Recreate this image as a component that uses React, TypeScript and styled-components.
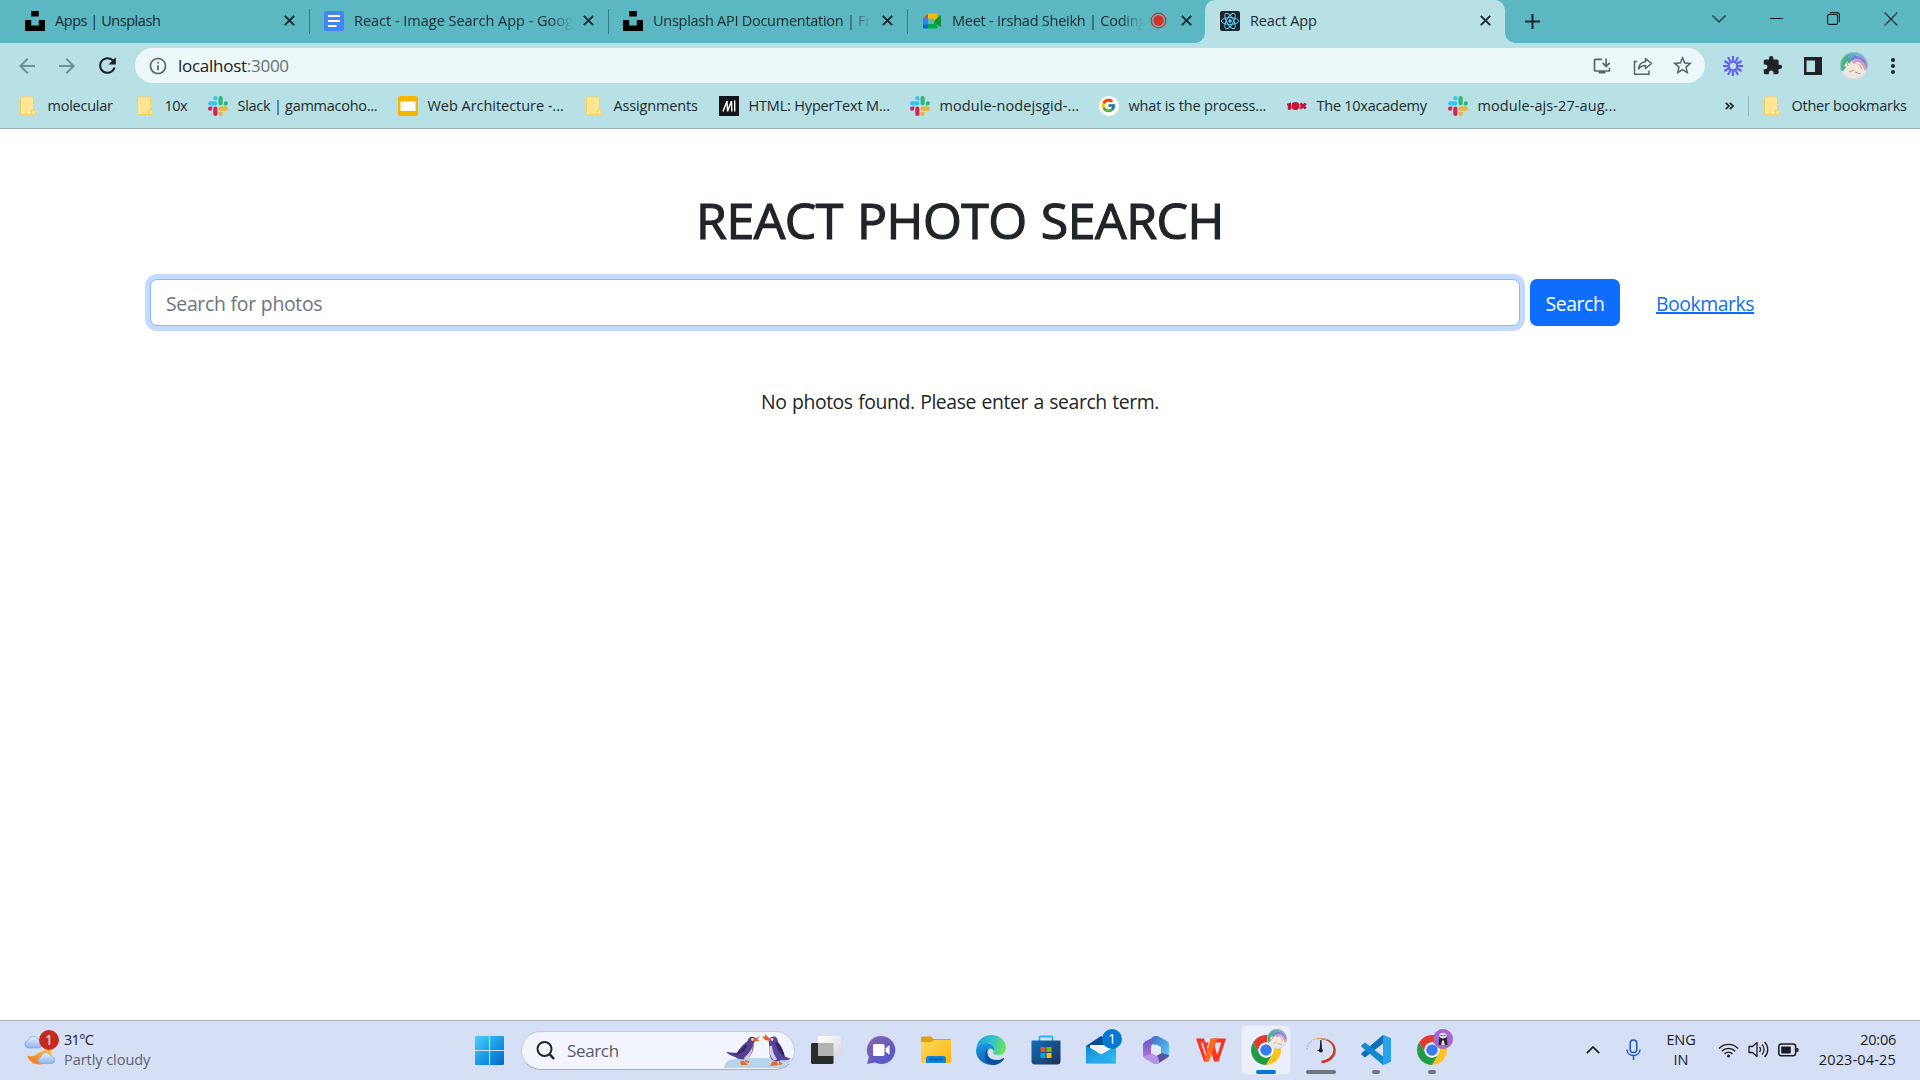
import React from "react";
import styled, { createGlobalStyle, css } from "styled-components";
import { FcGoogle } from "react-icons/fc";
import {
  MdArrowBack,
  MdArrowForward,
  MdRefresh,
  MdInfoOutline,
  MdInstallDesktop,
  MdStarBorder,
  MdExtension,
  MdMoreVert,
} from "react-icons/md";

const GlobalStyle = createGlobalStyle`
  * { box-sizing: border-box; }
  html, body { margin: 0; padding: 0; overflow: hidden; }
  body { font-family: "Open Sans", "Noto Sans", sans-serif; background: #fff; color: #212529; }
  svg { display: block; flex: none; }
`;

/* ---------- shell ---------- */

const Screen = styled.div`
  width: 1920px;
  height: 1080px;
  display: flex;
  flex-direction: column;
  overflow: hidden;
`;

const Label = styled.span<{ $ls?: number; $size?: number; $color?: string }>`
  font-size: ${(p) => p.$size ?? 14.5}px;
  letter-spacing: ${(p) => p.$ls ?? 0}px;
  color: ${(p) => p.$color ?? "#1c2a2e"};
  line-height: 20px;
  white-space: pre;
`;

const Slot = styled.span<{ $w: number }>`
  width: ${(p) => p.$w}px;
  flex: none;
  display: flex;
  align-items: center;
  justify-content: center;
`;

/* ---------- tab strip ---------- */

const TabStrip = styled.div`
  height: 43px;
  flex: none;
  display: flex;
  padding-left: 10px;
  background: #5bb8c2;
`;

const Tab = styled.div<{ $active?: boolean; $divider?: boolean }>`
  position: relative;
  width: 299px;
  flex: none;
  height: 43px;
  display: flex;
  align-items: center;
  padding: 0 14px 2px 15px;
  ${(p) =>
    p.$divider &&
    css`
      &::after {
        content: "";
        position: absolute;
        right: -1px;
        top: 9px;
        width: 1px;
        height: 25px;
        background: #2d7f89;
      }
    `}
  ${(p) =>
    p.$active &&
    css`
      width: 300px;
      margin-left: -1px;
      background: #b8e1e5;
      border-radius: 10px 10px 0 0;
      &::before,
      &::after {
        content: "";
        position: absolute;
        bottom: 0;
        width: 10px;
        height: 10px;
      }
      &::before {
        left: -10px;
        background: radial-gradient(circle at 0 0, transparent 9.5px, #b8e1e5 10px);
      }
      &::after {
        right: -10px;
        background: radial-gradient(circle at 100% 0, transparent 9.5px, #b8e1e5 10px);
      }
    `}
`;

const TabTitle = styled.div<{ $fade?: boolean }>`
  flex: 1;
  min-width: 0;
  margin-left: 10px;
  overflow: hidden;
  display: flex;
  ${(p) =>
    p.$fade &&
    css`
      mask-image: linear-gradient(90deg, #000 calc(100% - 24px), transparent 100%);
    `}
`;

const TabClose = styled.span`
  margin-left: 10px;
  flex: none;
`;

const WindowControls = styled.div`
  margin-left: auto;
  height: 37px;
  display: flex;
`;

/* ---------- toolbar ---------- */

const Toolbar = styled.div`
  height: 45px;
  flex: none;
  display: flex;
  align-items: center;
  padding-left: 7px;
  background: #b8e1e5;
`;

const Omnibox = styled.div`
  width: 1570px;
  height: 35px;
  margin: 0 7px 0 8px;
  padding: 0 3px 0 13px;
  flex: none;
  display: flex;
  align-items: center;
  border-radius: 18px;
  background: #ebf7f8;
`;

const Address = styled.div`
  flex: 1;
  margin-left: 10px;
  display: flex;
`;

const BookmarkBar = styled.div`
  height: 41px;
  flex: none;
  display: flex;
  align-items: center;
  padding: 0 0 5px 18px;
  background: #b8e1e5;
  border-bottom: 1px solid #93b4b7;
`;

const Bookmark = styled.div<{ $w: number }>`
  width: ${(p) => p.$w}px;
  flex: none;
  display: flex;
  align-items: center;
  gap: 9.5px;
`;

const BarDivider = styled.span`
  width: 1px;
  height: 20px;
  margin: 0 13px 0 14px;
  background: #86b5ba;
`;

const BarEnd = styled.div`
  margin-left: auto;
  display: flex;
  align-items: center;
  padding-right: 13px;
`;

/* ---------- page ---------- */

const Page = styled.main`
  flex: 1;
  display: flex;
  flex-direction: column;
  align-items: center;
  padding-top: 61px;
`;

const Heading = styled.h1`
  margin: 0;
  height: 60px;
  line-height: 60px;
  font-size: 50px;
  font-weight: 400;
  letter-spacing: -0.5px;
  word-spacing: 1.6px;
  color: #212529;
  -webkit-text-stroke: 1.2px #212529;
`;

const SearchRow = styled.form`
  width: 1620px;
  height: 47px;
  margin-top: 29px;
  display: flex;
  align-items: center;
`;

const SearchInput = styled.input`
  width: 1370px;
  height: 47px;
  padding: 2px 15px 0 15px;
  border: 1px solid #86b7fe;
  border-radius: 7px;
  outline: 0;
  box-shadow: 0 0 0 5px #c2dbfe;
  font: 400 19.4px "Open Sans", "Noto Sans", sans-serif;
  letter-spacing: -0.32px;
  word-spacing: 0.4px;
  color: #212529;
  &::placeholder {
    color: #6c757d;
    opacity: 1;
  }
`;

const SearchButton = styled.button`
  width: 90px;
  height: 47px;
  margin-left: 10px;
  padding: 2px 0 0;
  border: 0;
  border-radius: 7px;
  background: #0d6efd;
  color: #fff;
  font: 400 19.4px "Open Sans", "Noto Sans", sans-serif;
  letter-spacing: -0.4px;
`;

const BookmarksLink = styled.a`
  margin-left: 36px;
  padding-top: 2px;
  font-size: 19.4px;
  letter-spacing: -0.45px;
  line-height: 30px;
  color: #0d6efd;
  text-decoration: underline;
  text-decoration-thickness: 2px;
  text-underline-offset: 1px;
  text-decoration-skip-ink: none;
`;

const EmptyNote = styled.p`
  margin: 61px 0 0;
  font-size: 19.4px;
  letter-spacing: -0.42px;
  word-spacing: 0.9px;
  line-height: 30px;
`;

/* ---------- taskbar ---------- */

const Taskbar = styled.footer`
  height: 60px;
  flex: none;
  display: flex;
  align-items: center;
  background: #d5e0f7;
  border-top: 1px solid #a9afbd;
`;

const Weather = styled.div`
  width: 462px;
  padding-left: 24px;
  display: flex;
  align-items: center;
  gap: 7px;
`;

const TwoLines = styled.div<{ $align?: string }>`
  display: flex;
  flex-direction: column;
  align-items: ${(p) => p.$align ?? "flex-start"};
  padding-bottom: 2px;
`;

const WeatherIcon = styled.div`
  position: relative;
  width: 33px;
  height: 36px;
  margin-bottom: 6px;
`;

const Badge = styled.span<{ $bg: string; $x: number; $y: number }>`
  position: absolute;
  left: ${(p) => p.$x}px;
  top: ${(p) => p.$y}px;
  width: 20px;
  height: 20px;
  border-radius: 50%;
  background: ${(p) => p.$bg};
  color: #fff;
  font-size: 14px;
  line-height: 19px;
  text-align: center;
`;

const SearchPill = styled.div`
  width: 274px;
  height: 39px;
  margin: 0 3px 0 4px;
  flex: none;
  display: flex;
  align-items: center;
  padding: 0 2px 0 14px;
  border: 1px solid #c3cce2;
  border-bottom-color: #a6adbe;
  border-radius: 20px;
  background: #f2f5fd;
  overflow: hidden;
`;

const PillText = styled.div`
  flex: 1;
  margin-left: 12px;
  display: flex;
`;

const AppSlot = styled.div`
  position: relative;
  width: 55.1px;
  height: 59px;
  padding-bottom: 1px;
  flex: none;
  display: flex;
  align-items: center;
  justify-content: center;
`;

const AppTile = styled.div<{ $on?: boolean }>`
  position: relative;
  width: 48px;
  height: 48px;
  display: flex;
  align-items: center;
  justify-content: center;
  border-radius: 5px;
  background: ${(p) => (p.$on ? "#eaeffb" : "transparent")};
  box-shadow: ${(p) => (p.$on ? "0 0 0 1px #dde4f5" : "none")};
`;

const Indicator = styled.span<{ $w: number; $c: string }>`
  position: absolute;
  bottom: 0;
  left: ${(p) => 24 - p.$w / 2}px;
  width: ${(p) => p.$w}px;
  height: 4px;
  border-radius: 2px;
  background: ${(p) => p.$c};
`;

const AvatarBadge = styled.span`
  position: absolute;
  right: 3px;
  top: 3px;
`;

const Tray = styled.div`
  margin-left: auto;
  padding-right: 24px;
  display: flex;
  align-items: center;
`;

const TrayItem = styled(Slot)`
  padding-bottom: 2px;
`;

const Clock = styled(TwoLines)`
  width: 93px;
`;

/* ---------- drawings ---------- */

const CloseGlyph = () => (
  <svg width="11" height="11" viewBox="0 0 11 11" stroke="#17272b" strokeWidth="1.9">
    <path d="M.8.8l9.4 9.4M10.2.8L.8 10.2" />
  </svg>
);

const UnsplashIcon = () => (
  <svg width="20" height="20" viewBox="0 0 20 20">
    <path d="M6.2 0h7.6v5.6H6.2zM13.8 9H20v11H0V9h6.2v5.6h7.6z" fill="#000" />
  </svg>
);

const DocsIcon = () => (
  <svg width="20" height="20" viewBox="0 0 20 20">
    <rect width="20" height="20" rx="2" fill="#4285f4" />
    <path d="M4 5h12M4 10h12M4 15h8.500" stroke="#fff" strokeWidth="2" />
  </svg>
);

const MeetIcon = () => (
  <svg width="20" height="20" viewBox="0 0 20 20">
    <path d="M1 7.500L6 2.500V7.500z" fill="#ea4335" />
    <path d="M6 2.500h8.500a1 1 0 0 1 1 1V9L12 10V7.500H6z" fill="#fbbc04" />
    <path d="M1 7.500h5v6H1z" fill="#2684fc" />
    <path d="M1 13.500h5v4H2a1 1 0 0 1-1-1z" fill="#0066da" />
    <path d="M6 13h6v-3l3.500 1v5.500a1 1 0 0 1-1 1H6z" fill="#00ac47" />
    <path d="M12 10l5.700-5.600c.5-.4 1.300-.1 1.300.6v10c0 .7-.8 1-1.300.6z" fill="#15933c" />
  </svg>
);

const RecordIcon = () => (
  <svg width="17" height="17" viewBox="0 0 17 17">
    <circle cx="8.500" cy="8.500" r="7.300" fill="none" stroke="#d93025" strokeWidth="1.300" />
    <circle cx="8.500" cy="8.500" r="5.200" fill="#d93025" />
  </svg>
);

const Recording = styled.span`
  margin: 0 4px 0 6px;
`;

const ReactIcon = () => (
  <svg width="20" height="20" viewBox="0 0 20 20">
    <rect width="20" height="20" rx="2" fill="#20232a" />
    <g fill="none" stroke="#61dafb" strokeWidth=".9">
      <ellipse cx="10" cy="10" rx="8.700" ry="3.400" />
      <ellipse cx="10" cy="10" rx="8.700" ry="3.400" transform="rotate(60 10 10)" />
      <ellipse cx="10" cy="10" rx="8.700" ry="3.400" transform="rotate(120 10 10)" />
    </g>
    <circle cx="10" cy="10" r="1.700" fill="#61dafb" />
  </svg>
);

const FolderIcon = () => (
  <svg width="20" height="20" viewBox="0 0 20 20">
    <path d="M3.500 1h11a1 1 0 0 1 1 1v11.500c1.300.3 1.800 1.200 1.800 2.500v1.500a1 1 0 0 1-1 1H3.500a1 1 0 0 1-1-1V2a1 1 0 0 1 1-1z" fill="#ffe694" stroke="#f7d25c" />
    <path d="M15.500 13.500c-1.800.2-2 1.500-1.800 4.800" fill="none" stroke="#f0c84b" />
  </svg>
);

const SlackIcon = () => (
  <svg width="20" height="20" viewBox="0 0 24 24">
    <path fill="#e01e5a" d="M5.042 15.165a2.528 2.528 0 0 1-2.520 2.523A2.528 2.528 0 0 1 0 15.165a2.527 2.527 0 0 1 2.522-2.520h2.520v2.520zM6.313 15.165a2.527 2.527 0 0 1 2.521-2.520 2.527 2.527 0 0 1 2.521 2.520v6.313A2.528 2.528 0 0 1 8.834 24a2.528 2.528 0 0 1-2.521-2.522v-6.313z" />
    <path fill="#36c5f0" d="M8.834 5.042a2.528 2.528 0 0 1-2.521-2.520A2.528 2.528 0 0 1 8.834 0a2.528 2.528 0 0 1 2.521 2.522v2.520H8.834zM8.834 6.313a2.528 2.528 0 0 1 2.521 2.521 2.528 2.528 0 0 1-2.521 2.521H2.522A2.528 2.528 0 0 1 0 8.834a2.528 2.528 0 0 1 2.522-2.521h6.312z" />
    <path fill="#2eb67d" d="M18.956 8.834a2.528 2.528 0 0 1 2.522-2.521A2.528 2.528 0 0 1 24 8.834a2.528 2.528 0 0 1-2.522 2.521h-2.522V8.834zM17.688 8.834a2.528 2.528 0 0 1-2.523 2.521 2.527 2.527 0 0 1-2.520-2.521V2.522A2.527 2.527 0 0 1 15.165 0a2.528 2.528 0 0 1 2.523 2.522v6.312z" />
    <path fill="#ecb22e" d="M15.165 18.956a2.528 2.528 0 0 1 2.523 2.522A2.528 2.528 0 0 1 15.165 24a2.527 2.527 0 0 1-2.520-2.522v-2.522h2.520zM15.165 17.688a2.527 2.527 0 0 1-2.520-2.523 2.526 2.526 0 0 1 2.520-2.520h6.313A2.527 2.527 0 0 1 24 15.165a2.528 2.528 0 0 1-2.522 2.523h-6.313z" />
  </svg>
);

const SlidesIcon = () => (
  <svg width="20" height="20" viewBox="0 0 20 20">
    <rect width="20" height="20" rx="2" fill="#f9b400" />
    <rect x="2.500" y="5.500" width="15" height="9.500" fill="#fff" />
  </svg>
);

const MdnIcon = () => (
  <svg width="20" height="20" viewBox="0 0 20 20">
    <rect width="20" height="20" fill="#15141a" />
    <path d="M4 15.500L8 5M8 5l.5 10.500M8.500 15.500L12.500 5M12.500 5l.3 10.500M15.700 4.500v11" fill="none" stroke="#fff" strokeWidth="1.400" />
  </svg>
);

const GoogleIcon = () => (
  <svg width="20" height="20" viewBox="0 0 20 20">
    <circle cx="10" cy="10" r="10" fill="#fff" />
    <FcGoogle x="1.500" y="1.500" width="17" height="17" />
  </svg>
);

const TenXIcon = () => (
  <svg width="20" height="20" viewBox="0 0 20 20">
    <g fill="#c3143a">
      <path d="M0 7.800L4 6.500v7.200H.8V9.500H0z" />
      <circle cx="8.400" cy="10" r="4" />
    </g>
    <path d="M13.200 7.500l5.600 5M18.800 7.500l-5.600 5" stroke="#c3143a" strokeWidth="2.800" />
  </svg>
);

const ShareIcon = () => (
  <svg width="20" height="20" viewBox="0 0 20 20" fill="none" stroke="#5b6568" strokeWidth="1.500">
    <path d="M4 5.500H1.500v12.800H16V14.500" />
    <path d="M5.500 13C6 8.500 8.500 6 12.500 5.700V2.500l6 5-6 5V9.400c-3 0-5.200 1-7 3.600z" strokeLinejoin="round" />
  </svg>
);

const LoomIcon = () => (
  <svg width="20" height="20" viewBox="-10 -10 20 20">
    <g stroke="#625df5" strokeWidth="2.100">
      {Array.from({ length: 12 }, (_, i) => (
        <path key={i} d="M0-3.500V-10" transform={`rotate(${i * 30})`} />
      ))}
    </g>
    <circle r="4.200" fill="none" stroke="#625df5" strokeWidth="1.600" />
  </svg>
);

const SidePanelIcon = () => (
  <svg width="18" height="18" viewBox="0 0 18 18">
    <path d="M0 0h18v18H0zM2.500 3.500v11.500H11V3.500z" fill="#1f2326" fillRule="evenodd" />
  </svg>
);

const Unicorn = ({ size, id }: { size: number; id: string }) => (
  <svg width={size} height={size} viewBox="0 0 28 28">
    <clipPath id={id}>
      <circle cx="14" cy="14" r="14" />
    </clipPath>
    <g clipPath={`url(#${id})`}>
      <rect width="28" height="28" fill="#e8e6e8" />
      <path d="M0 0h19L3 19H0z" fill="#48b08c" />
      <g fill="none" strokeWidth="3">
        <path d="M9 6C14 0 23 0 29 12" stroke="#67a9dd" />
        <path d="M11 8C16 3 23 5 28 16" stroke="#7f84d2" />
        <path d="M13 11c4-5 10-2 13 7" stroke="#dd98c6" />
      </g>
      <path d="M4 14l3-5 3 4c3 2 7 2 10-2l3 5-3 2 2 4-5-3-6 1-5 2 2-4-1-3z" fill="#f2e8d4" />
      <path d="M7 9l1 5M9 20l5-2M15 20l6 2M19 12l3 5" stroke="#ad9a80" strokeWidth=".9" fill="none" />
    </g>
    <circle cx="14" cy="14" r="13.500" fill="none" stroke="#c7cdd0" strokeWidth=".7" />
  </svg>
);

const GhostAvatar = () => (
  <svg width="20" height="20" viewBox="0 0 20 20">
    <circle cx="10" cy="10" r="9.700" fill="#a864d2" stroke="#8f62ae" strokeWidth=".6" />
    <path d="M6.300 8h7.400l.8 8H5.500z" fill="#29242e" />
    <path d="M6.300 6.500C6.300 2.800 13.700 2.800 13.700 6.500c0 4-7.400 4-7.400 0z" fill="#e3dfe6" />
    <path d="M9 11.500h2l.8 4.500H8.200z" fill="#e3dfe6" />
    <path d="M7.500 6.500h2M10.500 6.500h2" stroke="#55505c" strokeWidth="1" />
  </svg>
);

const WeatherArt = () => (
  <svg width="33" height="36" viewBox="0 0 33 36">
    <defs>
      <linearGradient id="moon" x1="0" y1="1" x2="1" y2="0">
        <stop offset="0" stopColor="#f2711c" />
        <stop offset="1" stopColor="#ffc63d" />
      </linearGradient>
      <linearGradient id="cloud" x1="0" y1="0" x2="0" y2="1">
        <stop offset="0" stopColor="#e3f0ff" />
        <stop offset="1" stopColor="#8fb4ea" />
      </linearGradient>
    </defs>
    <path d="M3 25.500c3 1.500 7 1 11-2 4-2.800 7-4 13-5 1.500 8-3 16-12 16-6 0-10-4-12-9z" fill="url(#moon)" />
    <path d="M4 18a3.800 3.800 0 0 1 0-7.500 5.500 5.500 0 0 1 10-1.500c4-.5 5 9 1 9z" fill="url(#cloud)" stroke="#7fa9e2" strokeWidth=".7" />
    <path d="M17 33.500a3.500 3.500 0 0 1 0-6.800 5 5 0 0 1 9.500-1c5 0 5.500 7.800 1.500 7.800z" fill="url(#cloud)" stroke="#7fa9e2" strokeWidth=".7" />
  </svg>
);

const StartIcon = () => (
  <svg width="29" height="29" viewBox="0 0 29 29">
    <defs>
      <linearGradient id="win" x1="0" y1="0" x2="1" y2="1">
        <stop offset="0" stopColor="#4fd0ff" />
        <stop offset=".6" stopColor="#1192e0" />
        <stop offset="1" stopColor="#0069c8" />
      </linearGradient>
    </defs>
    <path d="M1 0h13v14H0V1a1 1 0 0 1 1-1zM15 0h13a1 1 0 0 1 1 1v13H15zM0 15h14v14H1a1 1 0 0 1-1-1zM15 15h14v13a1 1 0 0 1-1 1H15z" fill="url(#win)" />
  </svg>
);

const MagnifierIcon = () => (
  <svg width="19" height="20" viewBox="0 0 19 20" fill="none" stroke="#22262b" strokeWidth="2">
    <circle cx="8.500" cy="8" r="7" />
    <path d="M13.500 13l4.500 5" strokeWidth="2.600" />
  </svg>
);

const Penguins = () => (
  <svg width="68" height="35" viewBox="0 0 68 35">
    <path d="M0 35c1-5 3-8 8-8.500C20 24.500 50 24.500 66 27v8z" fill="#b7d6ee" />
    <path d="M32 6c-3-4-8-2-8.500 2-4 3-8 7-10.500 12l-11-1c3 3 6 4 9 5 4 3 11 4 15-1 3-4 4-8 3.500-12z" fill="#55418f" />
    <path d="M28.500 13c.5 4-1 9-5.500 13-1.500.5-3 0-3-1 3.500-3.500 7-6.500 8.500-12z" fill="#d3c9e8" />
    <path d="M22 11c-3 4-8 9-13 11 7 0 13-4 14-9z" fill="#33266a" />
    <path d="M30 6l6-3-3 3.500 3 1-6 1z" fill="#f0581e" />
    <circle cx="28.500" cy="6.500" r="1.400" fill="#f6d7b0" />
    <path d="M16 28l4 0 4 4-7 0zM21 27l4 1 0 2-4-1z" fill="#f0692a" />
    <path d="M45 6c3-4.500 9-3 9 3 3 3 5 8 6 14l7 3c-4 1.500-7 1.500-10 1-4 3-10 1-11-4-1-5-1-12-1-17z" fill="#57439a" />
    <path d="M45.500 13c-1 6 1 11 4 14 1.500.7 3.500 0 3.500-1-3-4-4.500-8-5-13z" fill="#d3c9e8" />
    <path d="M51 10c2 6 5 11 10 14-1-6-4-11-8-15z" fill="#34276b" />
    <path d="M46 6l-5-5 0 3-3-1 3 4 5 1z" fill="#f0581e" />
    <circle cx="48" cy="6.500" r="1.400" fill="#f6d7b0" />
    <path d="M48 29l4-1 3 4-9 1zM55 28l4 3-4 1z" fill="#f0692a" />
  </svg>
);

const TaskViewIcon = () => (
  <svg width="30" height="30" viewBox="0 0 30 30">
    <defs>
      <linearGradient id="tv" x1="0" y1="0" x2="1" y2="1">
        <stop offset="0" stopColor="#fff" />
        <stop offset="1" stopColor="#d9d9d9" />
      </linearGradient>
    </defs>
    <rect x="0" y="8" width="22.500" height="21" rx="1.500" fill="#2b2b2b" />
    <rect x="7" y="1" width="23" height="20" rx="1.500" fill="url(#tv)" />
    <path d="M7 8h15.500v13H8.500A1.500 1.500 0 0 1 7 19.500z" fill="#b3b3b3" />
  </svg>
);

const ChatIcon = () => (
  <svg width="30" height="30" viewBox="0 0 30 30">
    <defs>
      <linearGradient id="chat" x1="0" y1="0" x2=".7" y2="1">
        <stop offset="0" stopColor="#8d62a8" />
        <stop offset="1" stopColor="#5059c9" />
      </linearGradient>
    </defs>
    <path d="M15.500 1A14 14 0 1 1 9 27.500L1 29l1.800-7A14 14 0 0 1 15.500 1z" fill="url(#chat)" />
    <rect x="7" y="9" width="11.500" height="12" rx="1.500" fill="#fff" />
    <path d="M19.500 13.500L23.500 10v10l-4-3.500z" fill="#fff" />
  </svg>
);

const ExplorerIcon = () => (
  <svg width="30" height="28" viewBox="0 0 30 28">
    <defs>
      <linearGradient id="fold" x1="0" y1="0" x2="1" y2="1">
        <stop offset="0" stopColor="#ffd95c" />
        <stop offset="1" stopColor="#fbb60c" />
      </linearGradient>
    </defs>
    <path d="M0 2a1.500 1.500 0 0 1 1.500-1.500H10L12.500 3H28.500A1.500 1.500 0 0 1 30 4.500V10H0z" fill="#e0a008" />
    <path d="M0 6h10l3-2h17v21.500a1.500 1.500 0 0 1-1.500 1.500h-27A1.500 1.500 0 0 1 0 25.500z" fill="url(#fold)" />
    <path d="M5 27v-4.500A2.500 2.500 0 0 1 7.500 20h15a2.500 2.500 0 0 1 2.500 2.500V27z" fill="#1182d8" />
    <path d="M8.500 23.500h13" stroke="#0a4f94" strokeWidth="1.400" />
  </svg>
);

const EdgeIcon = () => (
  <svg width="30" height="30" viewBox="0 0 30 30">
    <defs>
      <linearGradient id="edgeTop" x1="0" y1=".3" x2="1" y2=".5">
        <stop offset="0" stopColor="#1f9fe0" />
        <stop offset=".5" stopColor="#30c2cf" />
        <stop offset="1" stopColor="#6be84f" />
      </linearGradient>
      <linearGradient id="edgeBody" x1="0" y1="0" x2="0" y2="1">
        <stop offset="0" stopColor="#1a9be2" />
        <stop offset="1" stopColor="#0b62b8" />
      </linearGradient>
    </defs>
    <path d="M.3 13C1.500 5 8 0 15.500 0 24 0 30 6 30 12.500c0 5-3.500 7.500-7.500 7.500-3.500 0-5.500-1-5.500-2 0-.8 1.500-1.500 1.500-4C18.500 10.500 15 8 11 8 6 8 1.500 10 .3 13z" fill="url(#edgeTop)" />
    <path d="M.2 14.500C1 9.500 6 8 10 8c4.500 0 8.500 2.500 8.500 6 0 1-.3 1.800-.7 2.500-.5-2-2-3-3.800-3-2 0-4 3-4 6C10 24 13 29 18 29.500c-10 2-19-6-17.800-15z" fill="url(#edgeBody)" />
    <path d="M13 13.600c-3 2.400-2.500 12.400 9 11.400 2.500-.2 4-1.300 5-1.800 1-.4 1.400.3.900 1C25.500 28 21 30 17 30 11 29 8 24 9 19c.5-3 2-5 4-5.400z" fill="#0c4f9c" />
  </svg>
);

const StoreIcon = () => (
  <svg width="30" height="30" viewBox="0 0 30 30">
    <defs>
      <linearGradient id="store" x1="0" y1="0" x2="1" y2="1">
        <stop offset="0" stopColor="#0d6fbd" />
        <stop offset="1" stopColor="#22304f" />
      </linearGradient>
    </defs>
    <path d="M8.500 6V2.500a1 1 0 0 1 1-1h11a1 1 0 0 1 1 1V6" fill="none" stroke="#2cb6f0" strokeWidth="1.800" />
    <path d="M.5 5.500h29V26a3.500 3.500 0 0 1-3.500 3.500H4A3.500 3.500 0 0 1 .5 26z" fill="url(#store)" />
    <path d="M9.500 12h5v5h-5z" fill="#f25022" />
    <path d="M15.500 12h5v5h-5z" fill="#7fba00" />
    <path d="M9.500 18h5v5h-5z" fill="#00a4ef" />
    <path d="M15.500 18h5v5h-5z" fill="#ffb900" />
  </svg>
);

const MailIcon = () => (
  <svg width="30" height="30" viewBox="0 0 30 30">
    <defs>
      <linearGradient id="mail" x1="0" y1="0" x2="1" y2="1">
        <stop offset="0" stopColor="#0f86d8" />
        <stop offset="1" stopColor="#35c5f4" />
      </linearGradient>
    </defs>
    <path d="M0 11L15 1l15 10v8H0z" fill="#0c4a96" />
    <path d="M4 10h22v5L15 20 4 13z" fill="#f0f0f0" />
    <path d="M0 10.500l15 9L30 11v17.500H0z" fill="url(#mail)" />
    <path d="M0 28.500L15 19l15 9.500z" fill="#29a9ea" opacity=".6" />
  </svg>
);

const M365Icon = () => (
  <svg width="28" height="30" viewBox="0 0 28 30">
    <defs>
      <linearGradient id="mA" x1="0" y1="0" x2="0" y2="1">
        <stop offset="0" stopColor="#5a58c8" />
        <stop offset="1" stopColor="#b877df" />
      </linearGradient>
      <linearGradient id="mB" x1="0" y1="0" x2="1" y2="1">
        <stop offset="0" stopColor="#3b6fd0" />
        <stop offset="1" stopColor="#5fd0f5" />
      </linearGradient>
    </defs>
    <path d="M14 1L3 6.500Q1 7.500 1 10v10q0 2 2 3l6 2V11l7-8z" fill="url(#mA)" />
    <path d="M10 2.200q4-2.400 8 0L25 6q2 1 2 3.500V20q0 1-1 2l-7-4v-6l-8-3z" fill="url(#mB)" />
    <path d="M9 24l1-4 4 1 5-2.500V18l8 2q0 2-2 3l-8 5q-3 1.500-6 0z" fill="#5b4fa8" />
    <path d="M1.500 21.500L10 18l6 4 1.500 6q-4 2-7 0L3 23.800z" fill="#b493e6" />
    <path d="M14 9.500l5 2.800v5.400l-5 2.800-5-2.800v-5.400z" fill="#e4e9fa" />
  </svg>
);

const WpsIcon = () => (
  <svg width="30" height="24" viewBox="0 0 30 24">
    <path d="M0 .5h8l4 13 3.500-9L17 .500h13L22.500 23.500H18L15.500 15l-3 8.500H8z" fill="#f8331f" />
    <path d="M19.500 4.500h5.800l-4 12.500-2.600-8.500z" fill="#d5e0f7" />
    <path d="M4.600 4.500h2.200l4.700 15-1 1.500z" fill="#d5e0f7" opacity=".85" />
    <path d="M14.500 .5h6.500L13 23.500H8.500z" fill="#ff6a20" />
    <path d="M6.800 4.500h5.800l-2.200 6.300z" fill="#f8331f" />
  </svg>
);

const ChromeIcon = () => (
  <svg width="30" height="30" viewBox="2 2 44 44">
    <path d="M24 13H43.050A22 22 0 0 0 4.950 13L14.470 29.500A11 11 0 0 1 24 13z" fill="#e33b2e" />
    <path d="M43.050 13A22 22 0 0 1 24 46L33.530 29.500A11 11 0 0 0 24 13z" fill="#fcc31e" />
    <path d="M4.950 13A22 22 0 0 0 24 46L33.530 29.500A11 11 0 0 1 14.470 29.500z" fill="#229b48" />
    <circle cx="24" cy="24" r="11" fill="#fff" />
    <circle cx="24" cy="24" r="8.500" fill="#3a7bee" />
  </svg>
);

const GaugeIcon = () => (
  <svg width="30" height="28" viewBox="0 0 30 28" fill="none">
    <path d="M1 14C1 8 5 4 10.500 2.700" stroke="#a9c486" strokeWidth="1.200" strokeDasharray="2 1" />
    <path d="M15 2.200C24 2 29.800 8 29.800 14.500 29.800 21.500 23 27 15.500 27.200L15.300 24.800C22 24 27.200 19.500 27.400 14 27.400 8.500 23 3.800 15 3.200z" fill="#cc3a22" />
    <path d="M10.500 2.700C14 2 18 2.200 21 3.800" stroke="#d0a45c" strokeWidth="1.200" />
    <path d="M14.300 4h1.200l.5 10.500h-2.400zM10.500 14.200l4-.6v2z" fill="#1c1c22" />
    <circle cx="14.800" cy="14.600" r="2" fill="#1c1c22" />
  </svg>
);

const VsCodeIcon = () => (
  <svg width="30" height="30" viewBox="0 0 30 30">
    <path d="M22 0l7 3a1.600 1.600 0 0 1 1 1.500V9L22 8.500 4 22.500 .8 20a1.300 1.300 0 0 1 0-2z" fill="#0f6fb5" />
    <path d="M22 30l7-3a1.600 1.600 0 0 0 1-1.500V21l-8 .5L4 7.500 .8 10a1.300 1.300 0 0 0 0 2z" fill="#1289d1" />
    <path d="M22 0l7 3a1.600 1.600 0 0 1 1 1.500v21a1.600 1.600 0 0 1-1 1.500l-7 3z" fill="#29a3ea" />
  </svg>
);

const TrayChevron = () => (
  <svg width="14" height="8" viewBox="0 0 14 8" fill="none" stroke="#1b1b1f" strokeWidth="1.700">
    <path d="M.8 7.200L7 1l6.200 6.200" />
  </svg>
);

const MicIcon = () => (
  <svg width="15" height="21" viewBox="0 0 15 21" fill="none" stroke="#1c57b5" strokeWidth="1.500">
    <rect x="4.200" y="1" width="6.600" height="12.500" rx="3.300" />
    <path d="M1 10.500c0 8 13 8 13 0M7.500 16.500V21" />
  </svg>
);

const WifiIcon = () => (
  <svg width="21" height="16" viewBox="0 0 21 16" fill="none" stroke="#1b1b1f" strokeWidth="1.400">
    <path d="M1 6.500a13 13 0 0 1 19 0M3.800 9.200a9.300 9.300 0 0 1 13.400 0M6.500 11.900a5.500 5.500 0 0 1 8 0" />
    <circle cx="10.500" cy="14" r="1.500" fill="#1b1b1f" stroke="none" />
  </svg>
);

const VolumeIcon = () => (
  <svg width="21" height="17" viewBox="0 0 21 17" fill="none" stroke="#1b1b1f" strokeWidth="1.300">
    <path d="M1 5.500h3.500L9 1.500v14l-4.500-4H1z" strokeLinejoin="round" />
    <path d="M11.500 6a3.500 3.500 0 0 1 0 5M14 3.500a7 7 0 0 1 0 10M16.600 1a10.500 10.500 0 0 1 0 15" />
  </svg>
);

const BatteryIcon = () => (
  <svg width="21" height="14" viewBox="0 0 21 14">
    <rect x=".8" y="1" width="16.800" height="11.800" rx="2.500" fill="none" stroke="#1b1b1f" strokeWidth="1.500" />
    <rect x="3.200" y="3.400" width="9.600" height="7" rx=".8" fill="#1b1b1f" />
    <path d="M18.300 5h1.200a1 1 0 0 1 1 1v2a1 1 0 0 1-1 1h-1.200z" fill="#1b1b1f" />
  </svg>
);

/* ---------- data ---------- */

const tabs = [
  { icon: <UnsplashIcon />, title: "Apps | Unsplash", ls: -0.45, divider: true },
  { icon: <DocsIcon />, title: "React - Image Search App - Goog", ls: -0.02, divider: true, fade: true },
  { icon: <UnsplashIcon />, title: "Unsplash API Documentation | Fre", ls: -0.27, divider: true, fade: true },
  { icon: <MeetIcon />, title: "Meet - Irshad Sheikh | Coding", ls: -0.24, fade: true, recording: true },
  { icon: <ReactIcon />, title: "React App", ls: -0.12, active: true },
];

const bookmarks = [
  { w: 117, icon: <FolderIcon />, text: "molecular", ls: -0.25 },
  { w: 73, icon: <FolderIcon />, text: "10x", ls: -0.5 },
  { w: 190, icon: <SlackIcon />, text: "Slack | gammacoho...", ls: -0.27 },
  { w: 186, icon: <SlidesIcon />, text: "Web Architecture -...", ls: -0.04 },
  { w: 135, icon: <FolderIcon />, text: "Assignments", ls: -0.15 },
  { w: 191, icon: <MdnIcon />, text: "HTML: HyperText M...", ls: -0.18 },
  { w: 189, icon: <SlackIcon />, text: "module-nodejsgid-...", ls: 0.08 },
  { w: 188, icon: <GoogleIcon />, text: "what is the process...", ls: -0.16 },
  { w: 161, icon: <TenXIcon />, text: "The 10xacademy", ls: -0.25 },
  { w: 172, icon: <SlackIcon />, text: "module-ajs-27-aug...", ls: 0.08 },
];

const grey = "#70767e";

const apps: { icon: React.ReactNode; on?: boolean; bar?: number; color?: string; extra?: React.ReactNode }[] = [
  { icon: <TaskViewIcon /> },
  { icon: <ChatIcon /> },
  { icon: <ExplorerIcon /> },
  { icon: <EdgeIcon /> },
  { icon: <StoreIcon /> },
  { icon: <MailIcon />, extra: <Badge $bg="#0078d4" $x={25} $y={3}>1</Badge> },
  { icon: <M365Icon /> },
  { icon: <WpsIcon /> },
  { icon: <ChromeIcon />, on: true, bar: 20, color: "#0078d4", extra: <AvatarBadge><Unicorn size={20} id="av-task" /></AvatarBadge> },
  { icon: <GaugeIcon />, bar: 30, color: grey },
  { icon: <VsCodeIcon />, bar: 8, color: grey },
  { icon: <ChromeIcon />, bar: 8, color: grey, extra: <AvatarBadge><GhostAvatar /></AvatarBadge> },
];

export default function App() {
  return (
    <Screen>
      <GlobalStyle />
      <TabStrip>
        {tabs.map((t) => (
          <Tab key={t.title} $active={t.active} $divider={t.divider}>
            {t.icon}
            <TabTitle $fade={t.fade}>
              <Label $ls={t.ls}>{t.title}</Label>
            </TabTitle>
            {t.recording && <Recording><RecordIcon /></Recording>}
            <TabClose>
              <CloseGlyph />
            </TabClose>
          </Tab>
        ))}
        <Slot $w={55}>
          <svg width="15" height="15" viewBox="0 0 15 15" stroke="#17272b" strokeWidth="2">
            <path d="M7.500 0v15M0 7.500h15" />
          </svg>
        </Slot>
        <WindowControls>
          <Slot $w={57.5}>
            <svg width="14" height="8" viewBox="0 0 14 8" fill="none" stroke="#10272b" strokeWidth="1.100">
              <path d="M.5.5L7 7 13.500.5" />
            </svg>
          </Slot>
          <Slot $w={57.5}>
            <svg width="13" height="1" viewBox="0 0 13 1">
              <rect width="13" height="1" fill="#0c1c20" />
            </svg>
          </Slot>
          <Slot $w={57.5}>
            <svg width="13" height="13" viewBox="0 0 13 13" fill="none" stroke="#0c1c20" strokeWidth="1.100">
              <rect x=".6" y="2.500" width="9.900" height="9.900" rx="1.500" />
              <path d="M2.800.6h7a2.600 2.600 0 0 1 2.600 2.600v7" />
            </svg>
          </Slot>
          <Slot $w={57.5}>
            <svg width="14" height="14" viewBox="0 0 14 14" stroke="#0c1c20" strokeWidth="1.100">
              <path d="M.7.7l12.600 12.600M13.300.7L.7 13.300" />
            </svg>
          </Slot>
        </WindowControls>
      </TabStrip>

      <Toolbar>
        <Slot $w={40}><MdArrowBack size={24} color="#6d9094" /></Slot>
        <Slot $w={40}><MdArrowForward size={24} color="#6d9094" /></Slot>
        <Slot $w={40}><MdRefresh size={25} color="#1b2225" /></Slot>
        <Omnibox>
          <MdInfoOutline size={20} color="#5b6568" />
          <Address>
            <Label $size={17} $ls={-0.27} $color="#202124">localhost</Label>
            <Label $size={17} $ls={-0.27} $color="#687073">:3000</Label>
          </Address>
          <Slot $w={40}><MdInstallDesktop size={20} color="#5b6568" /></Slot>
          <Slot $w={41}><ShareIcon /></Slot>
          <Slot $w={39}><MdStarBorder size={23} color="#5b6568" /></Slot>
        </Omnibox>
        <Slot $w={41}><LoomIcon /></Slot>
        <Slot $w={39}><MdExtension size={21} color="#1f2326" /></Slot>
        <Slot $w={41}><SidePanelIcon /></Slot>
        <Slot $w={41}><Unicorn size={28} id="av-bar" /></Slot>
        <Slot $w={37}><MdMoreVert size={24} color="#1f2326" /></Slot>
      </Toolbar>

      <BookmarkBar>
        {bookmarks.map((b) => (
          <Bookmark key={b.text} $w={b.w}>
            {b.icon}
            <Label $ls={b.ls}>{b.text}</Label>
          </Bookmark>
        ))}
        <BarEnd>
          <svg width="9" height="8" viewBox="0 0 9 8" fill="none" stroke="#1b2225" strokeWidth="1.700">
            <path d="M.8.8L4 4 .8 7.200M4.800.8L8 4 4.800 7.200" />
          </svg>
          <BarDivider />
          <Bookmark $w={145}>
            <FolderIcon />
            <Label $ls={-0.26}>Other bookmarks</Label>
          </Bookmark>
        </BarEnd>
      </BookmarkBar>

      <Page>
        <Heading>REACT PHOTO SEARCH</Heading>
        <SearchRow onSubmit={(e) => e.preventDefault()}>
          <SearchInput placeholder="Search for photos" />
          <SearchButton>Search</SearchButton>
          <BookmarksLink>Bookmarks</BookmarksLink>
        </SearchRow>
        <EmptyNote>No photos found. Please enter a search term.</EmptyNote>
      </Page>

      <Taskbar>
        <Weather>
          <WeatherIcon>
            <WeatherArt />
            <Badge $bg="#c42b1c" $x={15} $y={0}>1</Badge>
          </WeatherIcon>
          <TwoLines>
            <Label $ls={-0.7} $color="#1b1b1f">31°C</Label>
            <Label $ls={-0.05} $color="#5c616c">Partly cloudy</Label>
          </TwoLines>
        </Weather>
        <Slot $w={55}><StartIcon /></Slot>
        <SearchPill>
          <MagnifierIcon />
          <PillText>
            <Label $size={17} $ls={-0.35} $color="#565a63">Search</Label>
          </PillText>
          <Penguins />
        </SearchPill>
        {apps.map((a, i) => (
          <AppSlot key={i}>
            <AppTile $on={a.on}>
              {a.icon}
              {a.extra}
              {a.bar && <Indicator $w={a.bar} $c={a.color!} />}
            </AppTile>
          </AppSlot>
        ))}
        <Tray>
          <TrayItem $w={40}><TrayChevron /></TrayItem>
          <TrayItem $w={40}><MicIcon /></TrayItem>
          <Slot $w={56}>
            <TwoLines $align="center">
              <Label $ls={-0.1} $color="#1b1b1f">ENG</Label>
              <Label $color="#1b1b1f">IN</Label>
            </TwoLines>
          </Slot>
          <Slot $w={4} />
          <TrayItem $w={30}><WifiIcon /></TrayItem>
          <TrayItem $w={30}><VolumeIcon /></TrayItem>
          <TrayItem $w={30}><BatteryIcon /></TrayItem>
          <Clock $align="flex-end">
            <Label $ls={-0.25} $color="#1b1b1f">20:06</Label>
            <Label $ls={0.16} $color="#1b1b1f">2023-04-25</Label>
          </Clock>
        </Tray>
      </Taskbar>
    </Screen>
  );
}
